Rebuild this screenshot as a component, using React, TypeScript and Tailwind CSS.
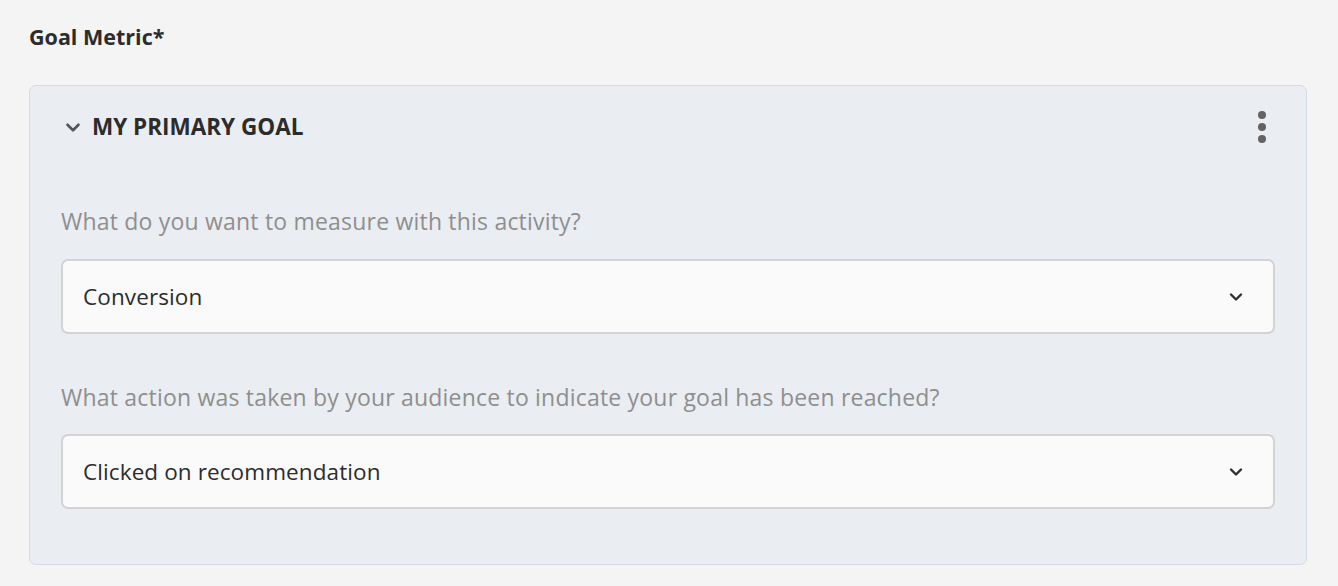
import React from "react";

function Chevron({ className }: { className?: string }) {
  return (
    <svg className={className} viewBox="0 0 14 10" fill="none">
      <path d="M2 2.5 L7 7.5 L12 2.5" stroke="currentColor" strokeWidth="2.4" strokeLinecap="round" strokeLinejoin="round" />
    </svg>
  );
}

function Select({ value }: { value: string }) {
  return (
    <div className="flex h-[75px] items-center justify-between rounded-[7px] border-2 border-[#d3d3d3] bg-[#fafafa] pl-[20px] pr-[30px]">
      <span className="text-[22.5px] leading-[30px] tracking-[0.1px] text-[#2c2c2c]">{value}</span>
      <Chevron className="h-[10px] w-[14px] text-[#2f2f2f]" />
    </div>
  );
}

export default function App() {
  return (
    <div
      className="h-[586px] w-full bg-[#f4f4f4] pl-[29px] pr-[31px] pt-[22px]"
      style={{ fontFamily: "'Open Sans', 'Noto Sans', sans-serif" }}
    >
      <div className="text-[21.5px] font-bold leading-[30px] text-[#2c2c2c]">Goal Metric*</div>
      <div className="mt-[33px] h-[480px] rounded-[7px] border border-[#d3dbe8] bg-[#eaedf2] px-[31px] pt-[21px]">
        <div className="flex h-[40px] items-center justify-between">
          <div className="flex items-center gap-[11px] pl-[4px]">
            <Chevron className="h-[11px] w-[16px] text-[#555]" />
            <span className="text-[22.5px] font-bold leading-[30px] text-[#2c2c2c]">MY PRIMARY GOAL</span>
          </div>
          <div className="mr-[9px] flex flex-col items-center gap-[4px]">
            <span className="h-[8px] w-[8px] rounded-full bg-[#626262]" />
            <span className="h-[8px] w-[8px] rounded-full bg-[#626262]" />
            <span className="h-[8px] w-[8px] rounded-full bg-[#626262]" />
          </div>
        </div>
        <div className="mt-[59px] text-[23px] leading-[30px] tracking-[0.2px] text-[#8f8f8f]">
          What do you want to measure with this activity?
        </div>
        <div className="mt-[23px]">
          <Select value="Conversion" />
        </div>
        <div className="mt-[48px] text-[23px] leading-[30px] tracking-[0.2px] text-[#8f8f8f]">
          What action was taken by your audience to indicate your goal has been reached?
        </div>
        <div className="mt-[22px]">
          <Select value="Clicked on recommendation" />
        </div>
      </div>
    </div>
  );
}
